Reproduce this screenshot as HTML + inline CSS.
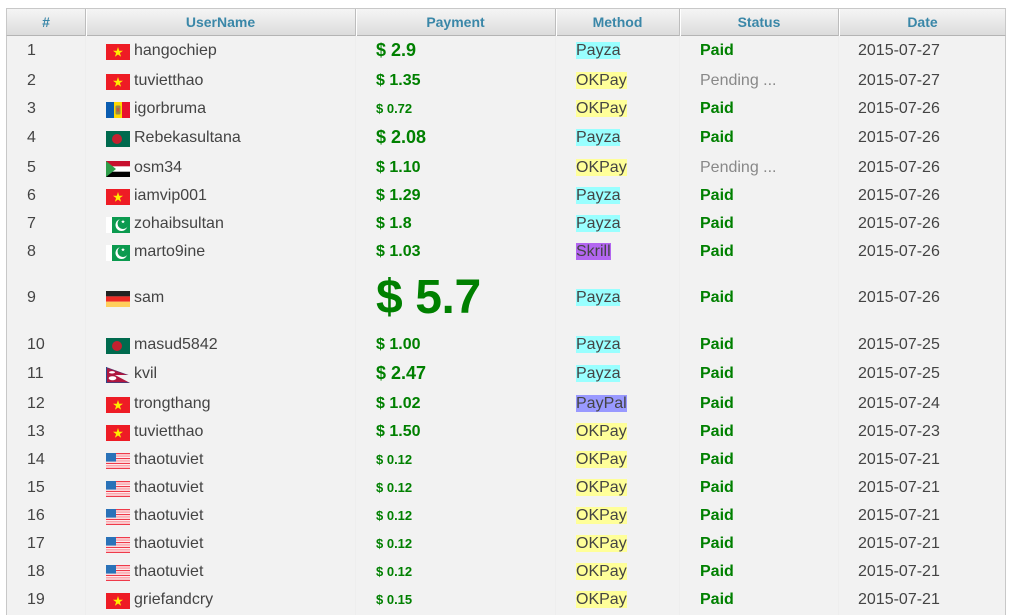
<!DOCTYPE html>
<html>
<head>
<meta charset="utf-8">
<style>
html,body{margin:0;padding:0;background:#fff;width:1017px;height:615px;overflow:hidden}
body{position:relative;font-family:"Liberation Sans",Arial,sans-serif;font-size:16px;color:#444}
#t{position:absolute;left:6px;top:8px;width:1000px;height:607px;background:#f2f2f2;border-left:1px solid #c8c8c8;border-right:1px solid #c8c8c8;box-sizing:border-box}
#h{position:absolute;left:6px;top:8px;width:1000px;height:28px;box-sizing:border-box;background:linear-gradient(#f5f5f5,#dcdcdc);border:1px solid #c8c8c8;border-bottom:1px solid #b4b4b4}
.th{position:absolute;top:8px;height:28px;line-height:29px;text-align:center;font-size:14px;font-weight:bold;color:#3a87a8}
.sep{position:absolute;top:9px;height:27px;width:1px;background:#fff;border-left:1px solid #bdbdbd}
.cl{position:absolute;top:36px;height:579px;width:1px;background:#eeeeee}
.r{position:absolute;left:0;width:1017px;height:0}
.r span,.r svg{position:absolute}
.n{left:27px;top:-9px;line-height:20px}
.u{left:134px;top:-9px;line-height:20px;white-space:nowrap}
.r svg{left:106px;top:-6px}
.p{left:376px;font-weight:bold;color:#008000;white-space:nowrap}
.s12{font-size:13px;top:-9px;line-height:20px}
.s16{font-size:16px;top:-9px;line-height:20px}
.s18{font-size:18px;top:-10px;line-height:20px}
.s48{font-size:48px;top:-29px;line-height:60px;letter-spacing:-.4px}
.m{left:576px;top:-8px;height:17px;line-height:17px;white-space:nowrap}
.a{background:#9ff}.o{background:#ff9}.l{background:#99f}.k{background:#b366f0}
.st{left:700px;top:-9px;line-height:20px;font-weight:bold;color:#008000;white-space:nowrap}
.pe{font-weight:normal;color:#888}
.d{left:858px;top:-9px;line-height:20px}
</style>
</head>
<body>
<svg width="0" height="0" style="position:absolute">
<defs>
<symbol id="vn" viewBox="0 0 24 16"><rect width="24" height="16" fill="#ee1c25"/><polygon fill="#ffee00" points="12,3 13.2,6.7 17,6.7 13.9,9 15.1,12.8 12,10.5 8.9,12.8 10.1,9 7,6.7 10.8,6.7"/></symbol>
<symbol id="md" viewBox="0 0 24 16"><rect width="8" height="16" fill="#0a5cb0"/><rect x="8" width="8" height="16" fill="#ffd800"/><rect x="16" width="8" height="16" fill="#e8112d"/><rect x="9.5" y="3.5" width="5" height="9" rx="1" fill="#9a8a4a"/><rect x="10.7" y="6" width="2.6" height="3.5" fill="#c65a3a"/></symbol>
<symbol id="bd" viewBox="0 0 24 16"><rect width="24" height="16" fill="#006a4e"/><circle cx="11" cy="8" r="5" fill="#c4202f"/></symbol>
<symbol id="sd" viewBox="0 0 24 16"><rect width="24" height="5.4" fill="#c8102e"/><rect y="5.4" width="24" height="5.3" fill="#fff"/><rect y="10.7" width="24" height="5.3" fill="#000"/><polygon points="0,0 10,8 0,16" fill="#2f9e4a"/></symbol>
<symbol id="pk" viewBox="0 0 24 16"><rect width="24" height="16" fill="#fff"/><rect x="6" width="18" height="16" fill="#0b9a4f"/><circle cx="15.5" cy="8" r="6" fill="#fff"/><circle cx="17" cy="6.6" r="5.4" fill="#0b9a4f"/><polygon points="17,2.6 17.5,4 19,4 17.8,4.9 18.3,6.3 17,5.5 15.7,6.3 16.2,4.9 15,4 16.5,4" fill="#fff"/></symbol>
<symbol id="de" viewBox="0 0 24 16"><rect width="24" height="5.4" fill="#222"/><rect y="5.4" width="24" height="5.3" fill="#ee2a24"/><rect y="10.7" width="24" height="5.3" fill="#ffcf5c"/></symbol>
<symbol id="np" viewBox="0 0 24 16"><polygon points="0,0 22.5,8 9,8 24,16 0,16" fill="#b0173f"/><rect width="1" height="16" fill="#2a4a8c"/><polygon points="0,0 22.5,8 21,8 0,.8" fill="#2a4a8c" opacity=".7"/><polygon points="0,16 24,16 22,15 0,15" fill="#2a4a8c" opacity=".7"/><ellipse cx="6" cy="5.3" rx="3" ry="1.2" fill="#fff"/><ellipse cx="6.5" cy="11.2" rx="3.8" ry="2" fill="#fff"/></symbol>
<symbol id="us" viewBox="0 0 24 16"><rect width="24" height="16" fill="#fff"/><g fill="#ef3a4a"><rect width="24" height="1.3"/><rect y="4.9" width="24" height="1.3"/><rect y="9.8" width="24" height="1.3"/><rect y="14.7" width="24" height="1.3"/></g><g fill="#f8929a"><rect y="2.4" width="24" height="1.3"/><rect y="7.3" width="24" height="1.3"/><rect y="12.2" width="24" height="1.3"/></g><rect width="10" height="8.6" fill="#2a72b8"/></symbol>
</defs>
</svg>
<div id="t"></div>
<div id="h"></div>
<div class="cl" style="left:85px"></div><div class="cl" style="left:355px"></div><div class="cl" style="left:555px"></div><div class="cl" style="left:679px"></div><div class="cl" style="left:838px"></div>
<div class="sep" style="left:85px"></div><div class="sep" style="left:355px"></div><div class="sep" style="left:555px"></div><div class="sep" style="left:679px"></div><div class="sep" style="left:838px"></div>
<div class="th" style="left:7px;width:78px">#</div>
<div class="th" style="left:86px;width:269px">UserName</div>
<div class="th" style="left:356px;width:199px">Payment</div>
<div class="th" style="left:556px;width:123px">Method</div>
<div class="th" style="left:680px;width:158px">Status</div>
<div class="th" style="left:839px;width:167px">Date</div>

<div class="r" style="top:50px"><span class="n">1</span><svg width="24" height="16"><use href="#vn"/></svg><span class="u">hangochiep</span><span class="p s18">$ 2.9</span><span class="m a">Payza</span><span class="st">Paid</span><span class="d">2015-07-27</span></div>
<div class="r" style="top:80px"><span class="n">2</span><svg width="24" height="16"><use href="#vn"/></svg><span class="u">tuvietthao</span><span class="p s16">$ 1.35</span><span class="m o">OKPay</span><span class="st pe">Pending ...</span><span class="d">2015-07-27</span></div>
<div class="r" style="top:108px"><span class="n">3</span><svg width="24" height="16"><use href="#md"/></svg><span class="u">igorbruma</span><span class="p s12">$ 0.72</span><span class="m o">OKPay</span><span class="st">Paid</span><span class="d">2015-07-26</span></div>
<div class="r" style="top:137px"><span class="n">4</span><svg width="24" height="16"><use href="#bd"/></svg><span class="u">Rebekasultana</span><span class="p s18">$ 2.08</span><span class="m a">Payza</span><span class="st">Paid</span><span class="d">2015-07-26</span></div>
<div class="r" style="top:167px"><span class="n">5</span><svg width="24" height="16"><use href="#sd"/></svg><span class="u">osm34</span><span class="p s16">$ 1.10</span><span class="m o">OKPay</span><span class="st pe">Pending ...</span><span class="d">2015-07-26</span></div>
<div class="r" style="top:195px"><span class="n">6</span><svg width="24" height="16"><use href="#vn"/></svg><span class="u">iamvip001</span><span class="p s16">$ 1.29</span><span class="m a">Payza</span><span class="st">Paid</span><span class="d">2015-07-26</span></div>
<div class="r" style="top:223px"><span class="n">7</span><svg width="24" height="16"><use href="#pk"/></svg><span class="u">zohaibsultan</span><span class="p s16">$ 1.8</span><span class="m a">Payza</span><span class="st">Paid</span><span class="d">2015-07-26</span></div>
<div class="r" style="top:251px"><span class="n">8</span><svg width="24" height="16"><use href="#pk"/></svg><span class="u">marto9ine</span><span class="p s16">$ 1.03</span><span class="m k">Skrill</span><span class="st">Paid</span><span class="d">2015-07-26</span></div>
<div class="r" style="top:297px"><span class="n">9</span><svg width="24" height="16"><use href="#de"/></svg><span class="u">sam</span><span class="p s48">$ 5.7</span><span class="m a">Payza</span><span class="st">Paid</span><span class="d">2015-07-26</span></div>
<div class="r" style="top:344px"><span class="n">10</span><svg width="24" height="16"><use href="#bd"/></svg><span class="u">masud5842</span><span class="p s16">$ 1.00</span><span class="m a">Payza</span><span class="st">Paid</span><span class="d">2015-07-25</span></div>
<div class="r" style="top:373px"><span class="n">11</span><svg width="24" height="16"><use href="#np"/></svg><span class="u">kvil</span><span class="p s18">$ 2.47</span><span class="m a">Payza</span><span class="st">Paid</span><span class="d">2015-07-25</span></div>
<div class="r" style="top:403px"><span class="n">12</span><svg width="24" height="16"><use href="#vn"/></svg><span class="u">trongthang</span><span class="p s16">$ 1.02</span><span class="m l">PayPal</span><span class="st">Paid</span><span class="d">2015-07-24</span></div>
<div class="r" style="top:431px"><span class="n">13</span><svg width="24" height="16"><use href="#vn"/></svg><span class="u">tuvietthao</span><span class="p s16">$ 1.50</span><span class="m o">OKPay</span><span class="st">Paid</span><span class="d">2015-07-23</span></div>
<div class="r" style="top:459px"><span class="n">14</span><svg width="24" height="16"><use href="#us"/></svg><span class="u">thaotuviet</span><span class="p s12">$ 0.12</span><span class="m o">OKPay</span><span class="st">Paid</span><span class="d">2015-07-21</span></div>
<div class="r" style="top:487px"><span class="n">15</span><svg width="24" height="16"><use href="#us"/></svg><span class="u">thaotuviet</span><span class="p s12">$ 0.12</span><span class="m o">OKPay</span><span class="st">Paid</span><span class="d">2015-07-21</span></div>
<div class="r" style="top:515px"><span class="n">16</span><svg width="24" height="16"><use href="#us"/></svg><span class="u">thaotuviet</span><span class="p s12">$ 0.12</span><span class="m o">OKPay</span><span class="st">Paid</span><span class="d">2015-07-21</span></div>
<div class="r" style="top:543px"><span class="n">17</span><svg width="24" height="16"><use href="#us"/></svg><span class="u">thaotuviet</span><span class="p s12">$ 0.12</span><span class="m o">OKPay</span><span class="st">Paid</span><span class="d">2015-07-21</span></div>
<div class="r" style="top:571px"><span class="n">18</span><svg width="24" height="16"><use href="#us"/></svg><span class="u">thaotuviet</span><span class="p s12">$ 0.12</span><span class="m o">OKPay</span><span class="st">Paid</span><span class="d">2015-07-21</span></div>
<div class="r" style="top:599px"><span class="n">19</span><svg width="24" height="16"><use href="#vn"/></svg><span class="u">griefandcry</span><span class="p s12">$ 0.15</span><span class="m o">OKPay</span><span class="st">Paid</span><span class="d">2015-07-21</span></div>
</body>
</html>
